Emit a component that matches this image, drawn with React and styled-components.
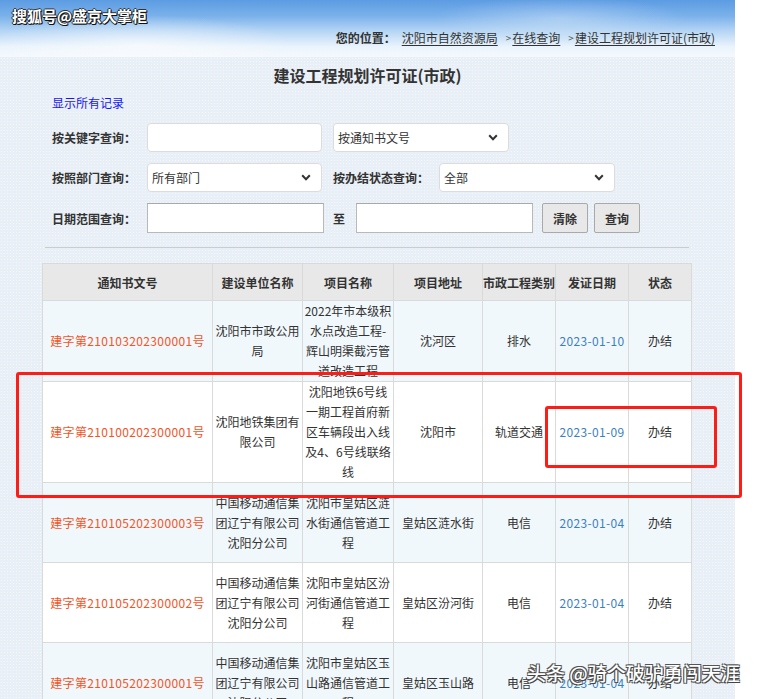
import React from "react";
import styled, { createGlobalStyle } from "styled-components";

const Global = createGlobalStyle`
  html, body { margin: 0; padding: 0; background: #fff; overflow: hidden; }
  body { font-family: "Noto Sans CJK SC", "Noto Sans", sans-serif; color: #333; }
  * { box-sizing: border-box; }
`;

const Root = styled.div`
  position: relative;
  width: 758px;
  height: 699px;
  overflow: hidden;
  background: #fff;
`;

const Page = styled.div`
  width: 735px;
  min-height: 699px;
  background-color: #e9eff6;
  background-image: radial-gradient(rgba(255, 255, 255, 0.55) 0.8px, transparent 0.9px);
  background-size: 3px 3px;
  display: flex;
  flex-direction: column;
`;

const Header = styled.div`
  position: relative;
  height: 57px;
  display: flex;
  align-items: flex-end;
  justify-content: flex-end;
  padding: 0 20px 11px 0;
  background:
    radial-gradient(ellipse 200px 40px at 140px 45px, rgba(255,255,255,0.55), transparent 75%),
    radial-gradient(ellipse 180px 30px at 560px 18px, rgba(255,255,255,0.3), transparent 70%),
    linear-gradient(180deg, #5c9ce2 0%, #7ab1ea 28%, #b6d6f4 55%, #eaf4fc 82%, #f5f9fe 100%);
`;

const Brand = styled.div`
  position: absolute;
  left: 12px;
  top: 5px;
  font-size: 15px;
  font-weight: 700;
  color: #fff;
  text-shadow: 1px 1px 0 #111, -1px 0 0 #333, 0 -1px 0 #333, 1px 0 0 #222, 0 1px 0 #222;
`;

const Crumbs = styled.div`
  display: flex;
  align-items: center;
  font-size: 12px;
  line-height: 16px;
  color: #333;
`;

const CrumbLabel = styled.span`
  font-weight: 700;
  margin-right: 6px;
`;

const CrumbSep = styled.span`
  color: #555;
  font-size: 10px;
  margin: 0 1px 0 8px;
`;

const CrumbLink = styled.a`
  color: #333;
  text-decoration: underline;
  text-underline-offset: 2px;
`;

const Title = styled.h1`
  margin: 6px 0 0;
  font-size: 16px;
  line-height: 24px;
  font-weight: 700;
  text-align: center;
  color: #333;
`;

const ShowAll = styled.a`
  display: block;
  margin: 6px 0 0 52px;
  font-size: 12px;
  line-height: 20px;
  color: #1717f0;
  text-decoration: none;
`;

const Form = styled.div`
  margin: 10px 0 0 52px;
  display: flex;
  flex-direction: column;
  gap: 11px;
`;

const FormRow = styled.div`
  display: flex;
  align-items: center;
  height: ${(p) => p.$h || 29}px;
`;

const Label = styled.span`
  width: ${(p) => p.$w || 95}px;
  flex: none;
  font-size: 12px;
  font-weight: 700;
  color: #333;
  margin-left: ${(p) => p.$ml || 0}px;
`;

const TextBox = styled.div`
  width: ${(p) => p.$w}px;
  height: 29px;
  background: #fff;
  border: 1px solid #dcdcdc;
  border-radius: 4px;
`;

const SelectBox = styled.div`
  width: ${(p) => p.$w}px;
  height: 29px;
  margin-left: ${(p) => p.$ml || 0}px;
  background: #fff;
  border: 1px solid #dcdcdc;
  border-radius: 4px;
  display: flex;
  align-items: center;
  justify-content: space-between;
  padding: 0 10px 0 4px;
  font-size: 12px;
  color: #333;
`;

const DateBox = styled.div`
  width: 177px;
  height: 30px;
  background: #fff;
  border: 1px solid #b9b9b9;
  border-top-color: #a8a8a8;
`;

const To = styled.span`
  width: 23px;
  margin-left: 9px;
  font-size: 12px;
  font-weight: 700;
  color: #333;
`;

const Button = styled.button`
  width: 46px;
  height: 30px;
  margin-left: ${(p) => p.$ml || 0}px;
  padding: 0;
  background: #e8e8e8;
  border: 1px solid #a9a9a9;
  border-radius: 2px;
  font-family: inherit;
  font-size: 12px;
  font-weight: 700;
  color: #333;
`;

const Divider = styled.hr`
  margin: 14px 0 0 45px;
  width: 644px;
  border: 0;
  border-top: 1px solid #c9ccd0;
  height: 0;
`;

const Table = styled.table`
  margin: 15px 0 0 42px;
  border-collapse: collapse;
  table-layout: fixed;
  width: 650px;
  font-size: 12px;
`;

const Th = styled.th`
  height: 37px;
  padding: 0;
  background: #e8e8e8;
  border: 1px solid #dadada;
  font-weight: 700;
  color: #333;
  white-space: nowrap;
`;

const Tr = styled.tr`
  background: ${(p) => (p.$alt ? "#f1f8fc" : "#fff")};
`;

const Td = styled.td`
  height: 80px;
  padding: 0 1px;
  border: 1px solid #dadada;
  text-align: center;
  vertical-align: middle;
  line-height: 20px;
  white-space: nowrap;
  letter-spacing: ${(p) => (p.$tone ? "0.35px" : "0")};
  color: ${(p) => (p.$tone === "no" ? "#f5531f" : p.$tone === "date" ? "#3b7fc0" : "#333")};
`;

const Mark = styled.div`
  position: absolute;
  left: ${(p) => p.$x}px;
  top: ${(p) => p.$y}px;
  width: ${(p) => p.$w}px;
  height: ${(p) => p.$h}px;
  border: 3px solid #fe1d16;
  border-radius: 3px;
  pointer-events: none;
`;

const Watermark = styled.div`
  position: absolute;
  left: 527px;
  top: 659px;
  font-size: 19px;
  font-weight: 500;
  color: #fff;
  white-space: nowrap;
  text-shadow: 1px 1px 0 #444, -1px -1px 0 #555, 1px -1px 0 #555, -1px 1px 0 #555;
`;

const Chevron = () => (
  <svg width="10" height="7" viewBox="0 0 10 7">
    <path d="M1.2 1.3 L5 5.2 L8.8 1.3" fill="none" stroke="#333" strokeWidth="2" />
  </svg>
);

const Lines = ({ lines }) =>
  lines.map((l, i) => (
    <React.Fragment key={i}>
      {i > 0 && <br />}
      {l}
    </React.Fragment>
  ));

const cols = [170, 90, 91, 89, 73, 73, 63];
const heads = ["通知书文号", "建设单位名称", "项目名称", "项目地址", "市政工程类别", "发证日期", "状态"];

const cm = ["中国移动通信集", "团辽宁有限公司", "沈阳分公司"];
const rows = [
  {
    no: "建字第210103202300001号",
    unit: ["沈阳市市政公用", "局"],
    name: ["2022年市本级积", "水点改造工程-", "辉山明渠截污管", "道改造工程"],
    addr: "沈河区",
    type: "排水",
    date: "2023-01-10",
  },
  {
    no: "建字第210100202300001号",
    unit: ["沈阳地铁集团有", "限公司"],
    name: ["沈阳地铁6号线", "一期工程首府新", "区车辆段出入线", "及4、6号线联络", "线"],
    addr: "沈阳市",
    type: "轨道交通",
    date: "2023-01-09",
  },
  {
    no: "建字第210105202300003号",
    unit: cm,
    name: ["沈阳市皇姑区涟", "水街通信管道工", "程"],
    addr: "皇姑区涟水街",
    type: "电信",
    date: "2023-01-04",
  },
  {
    no: "建字第210105202300002号",
    unit: cm,
    name: ["沈阳市皇姑区汾", "河街通信管道工", "程"],
    addr: "皇姑区汾河街",
    type: "电信",
    date: "2023-01-04",
  },
  {
    no: "建字第210105202300001号",
    unit: cm,
    name: ["沈阳市皇姑区玉", "山路通信管道工", "程"],
    addr: "皇姑区玉山路",
    type: "电信",
    date: "2023-01-04",
  },
];

export default function App() {
  return (
    <Root>
      <Global />
      <Page>
        <Header>
          <Brand>搜狐号@盛京大掌柜</Brand>
          <Crumbs>
            <CrumbLabel>您的位置：</CrumbLabel>
            <CrumbLink>沈阳市自然资源局</CrumbLink>
            <CrumbSep>&gt;</CrumbSep>
            <CrumbLink>在线查询</CrumbLink>
            <CrumbSep>&gt;</CrumbSep>
            <CrumbLink>建设工程规划许可证(市政)</CrumbLink>
          </Crumbs>
        </Header>
        <Title>建设工程规划许可证(市政)</Title>
        <ShowAll>显示所有记录</ShowAll>
        <Form>
          <FormRow>
            <Label>按关键字查询：</Label>
            <TextBox $w={175} />
            <SelectBox $w={176} $ml={11}>
              <span>按通知书文号</span>
              <Chevron />
            </SelectBox>
          </FormRow>
          <FormRow>
            <Label>按照部门查询：</Label>
            <SelectBox $w={175}>
              <span>所有部门</span>
              <Chevron />
            </SelectBox>
            <Label $w={106} $ml={11}>按办结状态查询：</Label>
            <SelectBox $w={176}>
              <span>全部</span>
              <Chevron />
            </SelectBox>
          </FormRow>
          <FormRow $h={30}>
            <Label>日期范围查询：</Label>
            <DateBox />
            <To>至</To>
            <DateBox />
            <Button $ml={9}>清除</Button>
            <Button $ml={6}>查询</Button>
          </FormRow>
        </Form>
        <Divider />
        <Table>
          <colgroup>
            {cols.map((w, i) => (
              <col key={i} style={{ width: w }} />
            ))}
          </colgroup>
          <thead>
            <tr>
              {heads.map((h) => (
                <Th key={h}>{h}</Th>
              ))}
            </tr>
          </thead>
          <tbody>
            {rows.map((r, i) => (
              <Tr key={r.no} $alt={i % 2 === 0}>
                <Td $tone="no">{r.no}</Td>
                <Td><Lines lines={r.unit} /></Td>
                <Td><Lines lines={r.name} /></Td>
                <Td>{r.addr}</Td>
                <Td>{r.type}</Td>
                <Td $tone="date">{r.date}</Td>
                <Td>办结</Td>
              </Tr>
            ))}
          </tbody>
        </Table>
      </Page>
      <Mark $x={16} $y={372} $w={726} $h={126} />
      <Mark $x={545} $y={406} $w={172} $h={62} />
      <Watermark>头条 @骑个破驴勇闯天涯</Watermark>
    </Root>
  );
}
